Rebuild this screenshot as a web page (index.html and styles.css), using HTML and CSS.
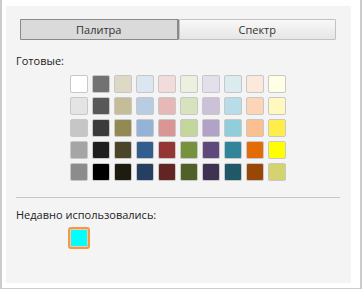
FILE: index.html
```html
<!DOCTYPE html>
<html lang="ru">
<head>
    <meta charset="UTF-8">
    <meta name="viewport" content="width=device-width, initial-scale=1.0">
    <title>Выбор цвета</title>
    <link rel="stylesheet" href="styles.css">
</head>
<body>
    <div class="frame">
        <div class="panel">
            <div class="tabs">
                <button class="tab active">Палитра</button>
                <button class="tab">Спектр</button>
            </div>

            <div class="caption">Готовые:</div>
            <div class="palette">
                <div class="grid">
                    <span class="swatch" style="background:#ffffff"></span>
                    <span class="swatch" style="background:#727272"></span>
                    <span class="swatch" style="background:#ddd9c4"></span>
                    <span class="swatch" style="background:#dce6f0"></span>
                    <span class="swatch" style="background:#f2dbdb"></span>
                    <span class="swatch" style="background:#ecf0df"></span>
                    <span class="swatch" style="background:#e4e0eb"></span>
                    <span class="swatch" style="background:#dbecf0"></span>
                    <span class="swatch" style="background:#fde9d9"></span>
                    <span class="swatch" style="background:#ffffe5"></span>

                    <span class="swatch" style="background:#e4e4e4"></span>
                    <span class="swatch" style="background:#585858"></span>
                    <span class="swatch" style="background:#c4bd97"></span>
                    <span class="swatch" style="background:#b8cce4"></span>
                    <span class="swatch" style="background:#e6b9b8"></span>
                    <span class="swatch" style="background:#d7e3bc"></span>
                    <span class="swatch" style="background:#ccc1d9"></span>
                    <span class="swatch" style="background:#b7dde8"></span>
                    <span class="swatch" style="background:#fbd5b5"></span>
                    <span class="swatch" style="background:#fff9c0"></span>

                    <span class="swatch" style="background:#c6c6c6"></span>
                    <span class="swatch" style="background:#3b3b3b"></span>
                    <span class="swatch" style="background:#938953"></span>
                    <span class="swatch" style="background:#95b3d7"></span>
                    <span class="swatch" style="background:#d99694"></span>
                    <span class="swatch" style="background:#c3d69b"></span>
                    <span class="swatch" style="background:#b2a2c7"></span>
                    <span class="swatch" style="background:#92cddc"></span>
                    <span class="swatch" style="background:#fac08f"></span>
                    <span class="swatch" style="background:#ffee4a"></span>

                    <span class="swatch" style="background:#a5a5a5"></span>
                    <span class="swatch" style="background:#1e1e1e"></span>
                    <span class="swatch" style="background:#4a4528"></span>
                    <span class="swatch" style="background:#325d8f"></span>
                    <span class="swatch" style="background:#943734"></span>
                    <span class="swatch" style="background:#76923c"></span>
                    <span class="swatch" style="background:#5f497a"></span>
                    <span class="swatch" style="background:#31859b"></span>
                    <span class="swatch" style="background:#e36c09"></span>
                    <span class="swatch" style="background:#ffff00"></span>

                    <span class="swatch" style="background:#8c8c8c"></span>
                    <span class="swatch" style="background:#000000"></span>
                    <span class="swatch" style="background:#1e1c11"></span>
                    <span class="swatch" style="background:#243f60"></span>
                    <span class="swatch" style="background:#632523"></span>
                    <span class="swatch" style="background:#4f6128"></span>
                    <span class="swatch" style="background:#3f3151"></span>
                    <span class="swatch" style="background:#205867"></span>
                    <span class="swatch" style="background:#974806"></span>
                    <span class="swatch" style="background:#d4d36e"></span>
                </div>
            </div>

            <div class="divider"></div>

            <div class="caption recent-caption">Недавно использовались:</div>
            <div class="palette">
                <div class="recent">
                    <span class="swatch selected" style="background:#00ffff"></span>
                </div>
            </div>
        </div>
    </div>
</body>
</html>
```

FILE: styles.css
```css
body {
    margin: 0;
    background: #fff;
    font-family: "Open Sans", sans-serif;
    font-size: 11px;
    color: #222;
}

.frame {
    width: 362px;
    height: 289px;
    box-sizing: border-box;
    border-left: 2px solid #cccccc;
    border-right: 2px solid #cccccc;
    border-bottom: 1px solid #cccccc;
    padding: 6px 0 0 4px;
}

.panel {
    width: 345px;
    height: 277px;
    box-sizing: border-box;
    background: #f4f4f4;
    padding: 13px 11px 0 10px;
}

.tabs {
    display: flex;
    margin: 0 4px;
    height: 21px;
}

.tab {
    flex: 1;
    height: 21px;
    padding: 0;
    font-family: inherit;
    font-size: 11px;
    color: #333;
    border: 1px solid #c2c2c2;
    border-radius: 1px;
    background: linear-gradient(#f8f8f8, #e6e6e6);
    cursor: pointer;
}

.tab.active {
    background: #dadada;
    border-color: #8a8a8a;
    border-right-width: 2px;
}

.caption {
    line-height: 14px;
    margin-top: 14px;
}

.palette {
    display: flex;
    justify-content: center;
}

.grid {
    display: grid;
    grid-template-columns: repeat(10, 18px);
    grid-auto-rows: 18px;
    gap: 4px;
    margin-top: 7px;
}

.recent {
    width: 216px;
    margin-top: 5px;
}

.swatch {
    display: block;
    width: 18px;
    height: 18px;
    box-sizing: border-box;
    border: 1px solid #c8c8c8;
    border-radius: 2px;
}

.swatch.selected {
    width: 22px;
    height: 22px;
    margin-left: -2px;
    border: 2px solid #f39a4a;
    border-radius: 3px;
    box-shadow: inset 0 0 0 1px #f8c89a;
}

.divider {
    height: 1px;
    background: #c8c8c8;
    margin-top: 16px;
}

.recent-caption {
    margin-top: 10px;
}
```
